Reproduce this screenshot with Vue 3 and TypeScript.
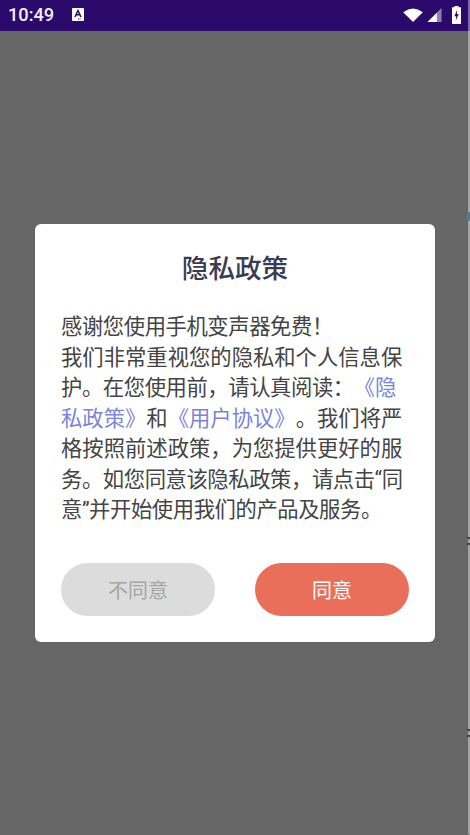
<script setup lang="ts">
const lead = '感谢您使用手机变声器免费！'
const edgeMarks = [
  { top: 212, height: 9, width: 3, color: '#4a7f9c' },
  { top: 537, height: 2, width: 3, color: '#444' },
  { top: 543, height: 2, width: 3, color: '#444' },
  { top: 729, height: 2, width: 3, color: '#444' },
  { top: 735, height: 2, width: 3, color: '#444' },
]
</script>

<template>
  <div class="screen">
    <header class="status">
      <span class="time">10:49</span>
      <svg class="notice" width="12" height="13" viewBox="0 0 12 13">
        <rect width="12" height="13" rx="1" fill="#fff" />
        <path d="M3 9 L6 2.5 L9 9 M4.2 6.8 H7.8" fill="none" stroke="#2b0a6b" stroke-width="1.5" />
        <path d="M6 11 h3" stroke="#2b0a6b" stroke-width="1" stroke-dasharray="1 .6" />
      </svg>
      <span class="spacer"></span>
      <svg class="wifi" width="20" height="14" viewBox="0 0 21 15">
        <path d="M0 4.5 Q10.5 -3.5 21 4.5 L10.5 15 Z" fill="#fff" />
      </svg>
      <svg class="signal" width="15" height="14" viewBox="0 0 15 15">
        <path d="M15 0 V15 H0 Z" fill="#8f7fb5" />
        <path d="M10 5 V15 H0 Z" fill="#fff" />
      </svg>
      <svg class="battery" width="9" height="18" viewBox="0 0 9 16" preserveAspectRatio="none">
        <path d="M2.5 1 V0 H6.5 V1 H9 V16 H0 V1 Z" fill="#fff" />
        <path d="M5.3 3 L2.4 9 H4.2 L3.7 13 L6.7 7 H4.8 Z" fill="#2b0a6b" />
      </svg>
    </header>

    <main class="overlay">
      <section class="dialog">
        <h1 class="title">隐私政策</h1>
        <p class="body"><span class="tight">{{ lead }}</span><br />我们非常重视您的隐私和个人信息保<span class="tight">护。在您使用前，请认真阅读：</span><a class="link">《隐私政策》</a>和<a class="link">《用户协议》</a>。我们将严格按照前述政策，为您提供更好的服<span class="tight">务。如您同意该隐私政策，请点击“同意”并开始使用我们的产品及服务。</span></p>
        <div class="actions">
          <button class="btn decline">不同意</button>
          <button class="btn accept">同意</button>
        </div>
      </section>
    </main>

    <div class="edge">
      <i
        v-for="mark in edgeMarks"
        :key="mark.top"
        class="mark"
        :style="{ top: mark.top + 'px', height: mark.height + 'px', width: mark.width + 'px', background: mark.color }"
      ></i>
    </div>
  </div>
</template>

<style>
html, body { margin: 0; padding: 0; }
</style>

<style scoped>
.screen {
  position: relative;
  width: 470px;
  height: 835px;
  display: flex;
  flex-direction: column;
  overflow: hidden;
  font-family: Roboto, "Noto Sans CJK SC", sans-serif;
  text-spacing-trim: space-all;
  background: #666;
}
.status {
  height: 31px;
  flex: none;
  box-sizing: border-box;
  padding: 0 9px 2px 8px;
  display: flex;
  align-items: center;
  background: #2b0a6b;
  color: #fff;
}
.time {
  font-family: Roboto, sans-serif;
  font-size: 18.2px;
  font-weight: 500;
  width: 64px;
  color: #f4f0fa;
}
.spacer { flex: 1; }
.wifi { margin-right: 4px; }
.signal { margin-right: 10px; }
.overlay {
  flex: 1;
  display: flex;
  justify-content: center;
  align-items: flex-start;
  padding-top: 193px;
}
.dialog {
  width: 400px;
  height: 418px;
  box-sizing: border-box;
  background: #fff;
  border-radius: 6px;
  padding: 25px 26px 0;
  display: flex;
  flex-direction: column;
}
.title {
  margin: 0;
  text-align: center;
  font-size: 26.6px;
  line-height: 40px;
  font-weight: 500;
  color: #3a3c52;
}
.body {
  margin: 23px -4px 0 0;
  font-size: 21.33px;
  line-height: 30.5px;
  color: #444;
  line-break: anywhere;
}
.tight { letter-spacing: -0.42px; }
.link { color: #7c83dc; }
.actions {
  margin-top: 37px;
  display: flex;
  justify-content: space-between;
}
.btn {
  width: 154px;
  height: 53px;
  border: 0;
  padding: 0;
  border-radius: 27px;
  font-family: inherit;
  font-size: 20px;
}
.decline { background: #dcdcdc; color: #a5a5a5; }
.accept { background: #ea6f5a; color: #fff; }
.edge {
  position: absolute;
  top: 0;
  right: 0;
  bottom: 0;
  width: 2px;
  background: rgba(255, 255, 255, 0.4);
  border-bottom-left-radius: 4px;
}
.mark {
  position: absolute;
  right: 0;
  display: block;
}
</style>
